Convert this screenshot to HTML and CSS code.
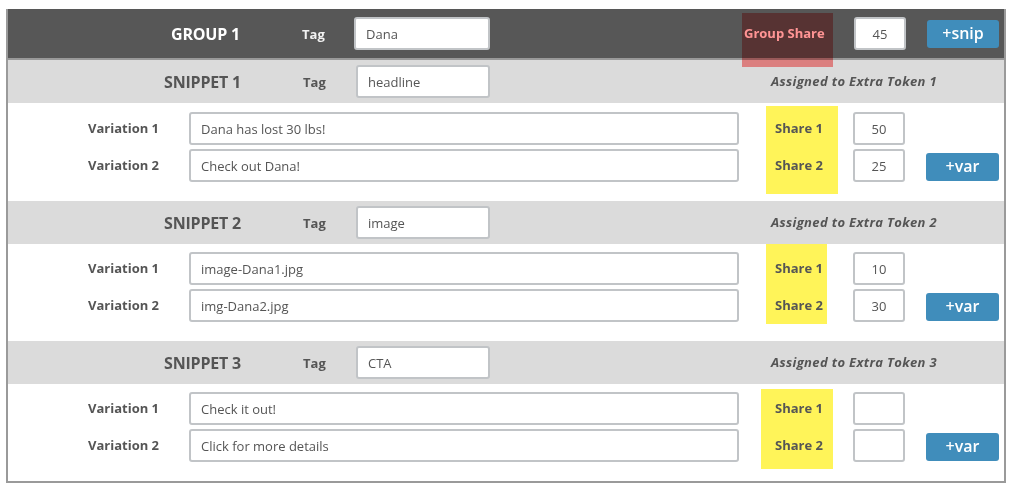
FILE: index.html
```html
<!DOCTYPE html>
<html lang="en">
<head>
    <meta charset="UTF-8">
    <title>Group 1 snippets</title>
    <link rel="stylesheet" href="styles.css">
</head>
<body>
<div class="group">
    <div class="group-head">
        <span class="title">GROUP 1</span>
        <span class="tag-label">Tag</span>
        <input class="field tag-field" type="text" value="Dana">
        <span class="group-share">Group Share</span>
        <input class="field num" type="text" value="45">
        <a class="button snip" href="#">+snip</a>
    </div>

    <div class="snippet">
        <div class="snippet-head">
            <span class="title">SNIPPET 1</span>
            <span class="tag-label">Tag</span>
            <input class="field tag-field" type="text" value="headline">
            <span class="assigned">Assigned to Extra Token 1</span>
        </div>
        <div class="snippet-body first">
            <div class="vars">
                <div class="var-row"><span class="var-label">Variation 1</span><input class="field text" type="text" value="Dana has lost 30 lbs!"></div>
                <div class="var-row"><span class="var-label">Variation 2</span><input class="field text" type="text" value="Check out Dana!"></div>
            </div>
            <div class="share-col">
                <div class="share-mark mark-1">
                    <span>Share 1</span>
                    <span>Share 2</span>
                </div>
            </div>
            <div class="nums">
                <input class="field num" type="text" value="50">
                <input class="field num" type="text" value="25">
            </div>
            <a class="button var" href="#">+var</a>
        </div>
    </div>

    <div class="snippet">
        <div class="snippet-head">
            <span class="title">SNIPPET 2</span>
            <span class="tag-label">Tag</span>
            <input class="field tag-field" type="text" value="image">
            <span class="assigned">Assigned to Extra Token 2</span>
        </div>
        <div class="snippet-body">
            <div class="vars">
                <div class="var-row"><span class="var-label">Variation 1</span><input class="field text" type="text" value="image-Dana1.jpg"></div>
                <div class="var-row"><span class="var-label">Variation 2</span><input class="field text" type="text" value="img-Dana2.jpg"></div>
            </div>
            <div class="share-col">
                <div class="share-mark mark-2">
                    <span>Share 1</span>
                    <span>Share 2</span>
                </div>
            </div>
            <div class="nums">
                <input class="field num" type="text" value="10">
                <input class="field num" type="text" value="30">
            </div>
            <a class="button var" href="#">+var</a>
        </div>
    </div>

    <div class="snippet">
        <div class="snippet-head">
            <span class="title">SNIPPET 3</span>
            <span class="tag-label">Tag</span>
            <input class="field tag-field" type="text" value="CTA">
            <span class="assigned">Assigned to Extra Token 3</span>
        </div>
        <div class="snippet-body">
            <div class="vars">
                <div class="var-row"><span class="var-label">Variation 1</span><input class="field text" type="text" value="Check it out!"></div>
                <div class="var-row"><span class="var-label">Variation 2</span><input class="field text" type="text" value="Click for more details"></div>
            </div>
            <div class="share-col">
                <div class="share-mark mark-3">
                    <span>Share 1</span>
                    <span>Share 2</span>
                </div>
            </div>
            <div class="nums">
                <input class="field num" type="text" value="">
                <input class="field num" type="text" value="">
            </div>
            <a class="button var" href="#">+var</a>
        </div>
    </div>
</div>
</body>
</html>
```

FILE: styles.css
```css
html,body{
    margin: 0;
    padding: 0;
    background: #fff;
    font-family: "Open Sans", "Liberation Sans", Arial, sans-serif;
    color: #555;
}
.group{
    width: 1000px;
    margin: 9px 0 0 6px;
    box-sizing: border-box;
    border: 2px solid #9a9a9a;
    border-top: none;
}
.field{
    box-sizing: border-box;
    height: 33px;
    border: 2px solid #c1c4c7;
    border-radius: 3px;
    background: #fff;
    font-family: inherit;
    font-size: 13px;
    color: #555;
    padding: 0 10px;
    outline: none;
    margin: 0;
}
.field.num{
    width: 52px;
    text-align: center;
    padding: 0;
}
.button{
    display: block;
    box-sizing: border-box;
    height: 28px;
    line-height: 27px;
    border-radius: 3px;
    background: #408dbb;
    color: #fff;
    text-align: center;
    text-decoration: none;
    font-size: 16px;
    font-weight: 600;
}

/* group header */
.group-head{
    display: flex;
    align-items: center;
    height: 49px;
    background: #575757;
    border-bottom: 2px solid #999;
}
.title{
    width: 232px;
    text-align: right;
    font-size: 16px;
    font-weight: 700;
    letter-spacing: -0.2px;
}
.group-head .title{
    color: #fff;
}
.tag-label{
    width: 52px;
    margin-left: 62px;
    font-size: 13px;
    font-weight: 700;
}
.group-head .tag-label{
    color: #f2f2f2;
}
.tag-field{
    width: 136px;
}
.group-share{
    position: relative;
    width: 89px;
    margin-left: 252px;
    padding-left: 2px;
    font-size: 13px;
    font-weight: 700;
    color: #fff;
    margin-bottom: 2px;
}
.group-share::after{
    content: "";
    position: absolute;
    left: 0;
    right: 0;
    top: -11px;
    height: 54px;
    background: #ff9494;
    mix-blend-mode: multiply;
}
.group-head .num{
    margin-left: 21px;
}
.button.snip{
    width: 72px;
    margin-left: 21px;
}

/* snippets */
.snippet-head{
    display: flex;
    align-items: center;
    height: 43px;
    background: #dbdbdb;
}
.snippet-head .title{
    width: 233px;
}
.snippet-head .tag-field{
    width: 134px;
    margin-left: 1px;
}
.assigned{
    margin-left: 281px;
    font-size: 13px;
    font-weight: 700;
    font-style: italic;
    letter-spacing: 0.35px;
    margin-top: -2px;
}
.snippet-body{
    display: flex;
    align-items: flex-start;
    padding: 8px 0 19px;
}
.snippet-body.first{
    padding-top: 9px;
}
.vars,.nums{
    display: flex;
    flex-direction: column;
    gap: 4px;
}
.var-row{
    display: flex;
    align-items: center;
}
.var-label{
    width: 101px;
    padding-left: 80px;
    font-size: 13px;
    font-weight: 700;
    margin-top: -2px;
}
.field.text{
    width: 550px;
    padding-left: 10px;
}
.share-col{
    width: 114px;
}
.share-mark{
    display: flex;
    flex-direction: column;
    gap: 4px;
    box-sizing: border-box;
    background: #fff459;
    margin-left: 27px;
    padding-left: 9px;
}
.share-mark span{
    height: 33px;
    line-height: 32px;
    font-size: 13px;
    font-weight: 700;
}
.mark-1{
    width: 72px;
    height: 88px;
    margin-top: -6px;
    padding-top: 6px;
    margin-bottom: -12px;
}
.mark-2{
    width: 61px;
    height: 80px;
    margin-top: -8px;
    padding-top: 8px;
    margin-bottom: -2px;
}
.mark-3{
    width: 72px;
    height: 80px;
    margin-left: 22px;
    padding-left: 14px;
    margin-top: -3px;
    padding-top: 3px;
    margin-bottom: -7px;
}
.button.var{
    width: 73px;
    margin-left: 21px;
    margin-top: 41px;
    font-size: 16px;
}
```
